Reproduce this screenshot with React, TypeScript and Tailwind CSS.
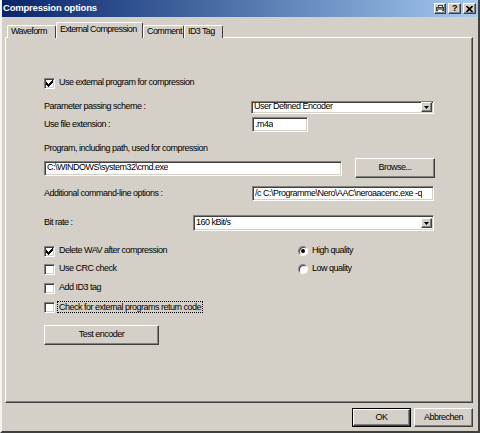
import React from "react"

const sunken =
  "border border-t-[#808080] border-l-[#808080] border-b-white border-r-white shadow-[inset_1px_1px_0_#404040,inset_-1px_-1px_0_#d4d0c8]"
const raised =
  "border border-t-white border-l-white border-r-[#404040] border-b-[#404040] shadow-[inset_-1px_-1px_0_#808080] bg-[#d4d0c8]"

function Check({ checked }: { checked?: boolean }) {
  return (
    <span className={`flex h-[11px] w-[11px] shrink-0 items-center justify-center bg-white ${sunken}`}>
      {checked && (
        <svg width="7" height="7" viewBox="0 0 7 7" shapeRendering="crispEdges">
          <path d="M0 2 L2 4 L6 0 L7 0 L7 2 L2 7 L0 5 Z" fill="#000" />
        </svg>
      )}
    </span>
  )
}

function Radio({ checked }: { checked?: boolean }) {
  return (
    <span className="flex h-[10px] w-[10px] shrink-0 items-center justify-center rounded-full border border-t-[#808080] border-l-[#808080] border-b-white border-r-white bg-white shadow-[inset_1px_1px_0_#404040]">
      {checked && <span className="h-[4px] w-[4px] rounded-full bg-black" />}
    </span>
  )
}

function DropArrow() {
  return (
    <span className={`flex h-[10px] w-[11px] shrink-0 items-center justify-center ${raised}`}>
      <svg width="5" height="3" viewBox="0 0 5 3">
        <path d="M0 0 H5 L2.5 3 Z" fill="#000" />
      </svg>
    </span>
  )
}

function Select({ value, className }: { value: string; className: string }) {
  return (
    <div className={`flex items-center bg-white pl-[2px] pr-px ${sunken} ${className}`}>
      <span className="flex-1 truncate">{value}</span>
      <DropArrow />
    </div>
  )
}

function Input({ value, className }: { value: string; className: string }) {
  return (
    <div className={`flex items-center bg-white pl-[2px] ${sunken} ${className}`}>
      <span className="truncate">{value}</span>
    </div>
  )
}

function Button({ label, className }: { label: string; className: string }) {
  return <div className={`flex items-center justify-center ${raised} ${className}`}>{label}</div>
}

const tabs = [
  { label: "Waveform", w: "w-[49px]" },
  { label: "External Compression", w: "w-[87px]", active: true },
  { label: "Comment", w: "w-[41px]" },
  { label: "ID3 Tag", w: "w-[39px]" },
]

export default function App() {
  return (
    <div className="flex h-[433px] w-[480px] flex-col overflow-hidden border-b-2 border-l-2 border-r-2 border-b-[#404040] border-l-[#f4f3ef] border-r-[#404040] bg-[#d4d0c8] font-['Liberation_Sans',Arial,sans-serif] text-[9px] tracking-[-0.5px] text-black">
      {/* Title bar */}
      <div className="flex h-[17px] items-center bg-linear-to-r from-[#0a246a] to-[#a6caf0] pl-px pr-[2px]">
        <span className="flex-1 text-[9.5px] font-bold tracking-[-0.2px] text-white">Compression options</span>
        <div className="flex gap-[2px]">
          <span className={`flex h-[11px] w-[12px] items-center justify-center ${raised}`}>
            <svg width="8" height="7" viewBox="0 0 8 7" shapeRendering="crispEdges">
              <rect x="2" y="0" width="4" height="2" fill="#fff" stroke="#404040" strokeWidth="1" />
              <rect x="0.5" y="2.5" width="7" height="3" fill="#808080" stroke="#404040" strokeWidth="1" />
              <rect x="2" y="5" width="4" height="2" fill="#fff" />
            </svg>
          </span>
          <span className={`flex h-[11px] w-[13px] items-center justify-center text-[9px] font-bold leading-none ${raised}`}>?</span>
          <span className={`flex h-[11px] w-[13px] items-center justify-center ${raised}`}>
            <svg width="7" height="6" viewBox="0 0 7 6">
              <path d="M0.5 0 L6.5 6 M6.5 0 L0.5 6" stroke="#000" strokeWidth="1.6" />
            </svg>
          </span>
        </div>
      </div>

      {/* Tabs */}
      <div className="relative z-10 -mb-px ml-[5px] mt-[5px] flex h-[16px] items-end tracking-[-0.6px]">
        {tabs.map((t) => (
          <div
            key={t.label}
            className={`flex shrink-0 items-center whitespace-nowrap rounded-t-[2px] border-l border-r border-t border-l-white border-r-[#404040] border-t-white bg-[#d4d0c8] pl-[3px] ${t.w} ${
              t.active ? "h-[16px] pb-[2px]" : "h-[13px]"
            }`}
          >
            {t.label}
          </div>
        ))}
      </div>

      {/* Panel */}
      <div className="ml-[3px] flex h-[366px] w-[468px] flex-col border border-b-[#404040] border-l-white border-r-[#404040] border-t-white pl-[38px] shadow-[inset_-1px_-1px_0_#808080]">
        <div className="mt-[38px] flex h-[14px] items-center gap-[4px]">
          <Check checked />
          <span>Use external program for compression</span>
        </div>

        <div className="mt-[10px] flex h-[14px] items-center">
          <span className="w-[207px]">Parameter passing scheme :</span>
          <Select value="User Defined Encoder" className="h-[13px] w-[183px]" />
        </div>

        <div className="mt-[3px] flex h-[15px] items-center">
          <span className="w-[208px]">Use file extension :</span>
          <Input value=".m4a" className="h-[15px] w-[56px]" />
        </div>

        <div className="mt-[11px] flex h-[12px] items-center">
          <span>Program, including path, used for compression</span>
        </div>

        <div className="mt-[3px] flex h-[20px] items-center">
          <Input value="C:\WINDOWS\system32\cmd.exe" className="h-[15px] w-[298px]" />
          <Button label="Browse..." className="ml-[13px] h-[20px] w-[80px]" />
        </div>

        <div className="mt-[8px] flex h-[15px] items-center">
          <span className="w-[208px]">Additional command-line options :</span>
          <Input value="/c C:\Programme\Nero\AAC\neroaacenc.exe -q" className="h-[15px] w-[182px]" />
        </div>

        <div className="mt-[14px] flex h-[16px] items-center">
          <span className="w-[149px]">Bit rate :</span>
          <Select value="160 kBit/s" className="h-[16px] w-[241px]" />
        </div>

        <div className="mt-[13px] flex h-[14px] items-center">
          <div className="flex w-[254px] items-center gap-[4px]">
            <Check checked />
            <span>Delete WAV after compression</span>
          </div>
          <div className="flex items-center gap-[4px]">
            <Radio checked />
            <span>High quality</span>
          </div>
        </div>

        <div className="mt-[4px] flex h-[14px] items-center">
          <div className="flex w-[254px] items-center gap-[4px]">
            <Check />
            <span>Use CRC check</span>
          </div>
          <div className="flex items-center gap-[4px]">
            <Radio />
            <span>Low quality</span>
          </div>
        </div>

        <div className="mt-[5px] flex h-[14px] items-center gap-[4px]">
          <Check />
          <span>Add ID3 tag</span>
        </div>

        <div className="mt-[5px] flex h-[14px] items-center gap-[2px]">
          <Check />
          <span className="border border-dotted border-black px-px leading-[10px]">Check for external programs return code</span>
        </div>

        <Button label="Test encoder" className="mt-[11px] h-[20px] w-[115px]" />
      </div>

      {/* Footer buttons */}
      <div className="mt-[5px] flex justify-end gap-[3px] pr-[5px]">
        <div className="border border-black">
          <Button label="OK" className="h-[17px] w-[57px]" />
        </div>
        <Button label="Abbrechen" className="h-[19px] w-[59px]" />
      </div>
    </div>
  )
}
